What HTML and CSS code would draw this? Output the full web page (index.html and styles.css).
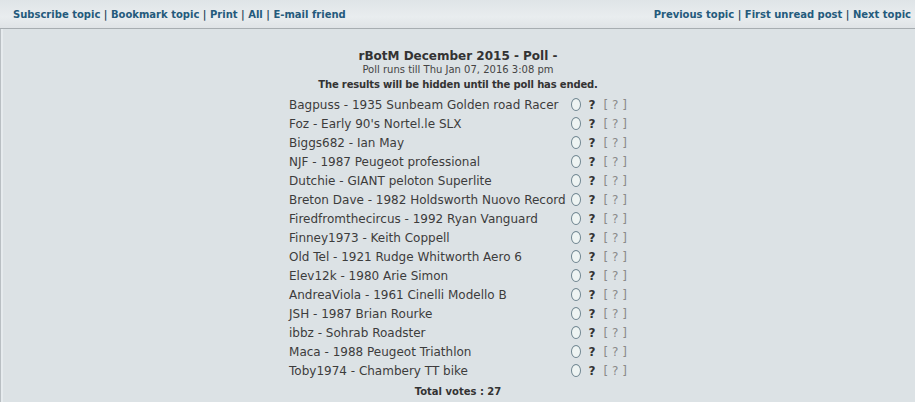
FILE: index.html
```html
<!DOCTYPE html>
<html>
<head>
<meta charset="utf-8">
<link rel="stylesheet" href="styles.css">
</head>
<body>
<div class="topbar">
  <div class="links"><a>Subscribe topic</a> | <a>Bookmark topic</a> | <a>Print</a> | <a>All</a> | <a>E-mail friend</a></div>
  <div class="links"><a>Previous topic</a> | <a>First unread post</a> | <a>Next topic</a></div>
</div>
<div class="page">
  <div class="poll">
    <div class="title">rBotM December 2015 - Poll -</div>
    <div class="runs">Poll runs till Thu Jan 07, 2016 3:08 pm</div>
    <div class="hidden">The results will be hidden until the poll has ended.</div>
    <table class="options">
      <tr><td class="opt">Bagpuss - 1935 Sunbeam Golden road Racer</td><td class="rad"><span class="radio"></span></td><td class="q">?</td><td class="br">[ ? ]</td></tr>
      <tr><td class="opt">Foz - Early 90's Nortel.le SLX</td><td class="rad"><span class="radio"></span></td><td class="q">?</td><td class="br">[ ? ]</td></tr>
      <tr><td class="opt">Biggs682 - Ian May</td><td class="rad"><span class="radio"></span></td><td class="q">?</td><td class="br">[ ? ]</td></tr>
      <tr><td class="opt">NJF - 1987 Peugeot professional</td><td class="rad"><span class="radio"></span></td><td class="q">?</td><td class="br">[ ? ]</td></tr>
      <tr><td class="opt">Dutchie - GIANT peloton Superlite</td><td class="rad"><span class="radio"></span></td><td class="q">?</td><td class="br">[ ? ]</td></tr>
      <tr><td class="opt">Breton Dave - 1982 Holdsworth Nuovo Record</td><td class="rad"><span class="radio"></span></td><td class="q">?</td><td class="br">[ ? ]</td></tr>
      <tr><td class="opt">Firedfromthecircus - 1992 Ryan Vanguard</td><td class="rad"><span class="radio"></span></td><td class="q">?</td><td class="br">[ ? ]</td></tr>
      <tr><td class="opt">Finney1973 - Keith Coppell</td><td class="rad"><span class="radio"></span></td><td class="q">?</td><td class="br">[ ? ]</td></tr>
      <tr><td class="opt">Old Tel - 1921 Rudge Whitworth Aero 6</td><td class="rad"><span class="radio"></span></td><td class="q">?</td><td class="br">[ ? ]</td></tr>
      <tr><td class="opt">Elev12k - 1980 Arie Simon</td><td class="rad"><span class="radio"></span></td><td class="q">?</td><td class="br">[ ? ]</td></tr>
      <tr><td class="opt">AndreaViola - 1961 Cinelli Modello B</td><td class="rad"><span class="radio"></span></td><td class="q">?</td><td class="br">[ ? ]</td></tr>
      <tr><td class="opt">JSH - 1987 Brian Rourke</td><td class="rad"><span class="radio"></span></td><td class="q">?</td><td class="br">[ ? ]</td></tr>
      <tr><td class="opt">ibbz - Sohrab Roadster</td><td class="rad"><span class="radio"></span></td><td class="q">?</td><td class="br">[ ? ]</td></tr>
      <tr><td class="opt">Maca - 1988 Peugeot Triathlon</td><td class="rad"><span class="radio"></span></td><td class="q">?</td><td class="br">[ ? ]</td></tr>
      <tr><td class="opt">Toby1974 - Chambery TT bike</td><td class="rad"><span class="radio"></span></td><td class="q">?</td><td class="br">[ ? ]</td></tr>
    </table>
    <div class="total">Total votes : 27</div>
  </div>
</div>
</body>
</html>
```

FILE: styles.css
```css
html, body {
  margin: 0;
  padding: 0;
}
body {
  background: #dce2e5;
  font-family: "DejaVu Sans", Verdana, sans-serif;
  color: #3a3a3a;
  height: 402px;
  overflow: hidden;
}
.topbar {
  display: flex;
  justify-content: space-between;
  align-items: center;
  height: 29px;
  padding: 1px 4px 0 13px;
  box-sizing: border-box;
  background: linear-gradient(#dfe4e7, #e9edef 60%, #dfe3e6);
  border-bottom: 1px solid #a7adb1;
  font-size: 10px;
  font-weight: bold;
  color: #2b4a5e;
}
.links a {
  color: #245a7c;
}
.page {
  border-left: 1px solid #b9bfc3;
  box-shadow: inset 2px 0 0 #e6ebee;
  height: 373px;
  padding-top: 19px;
  box-sizing: border-box;
}
.poll {
  text-align: center;
}
.title {
  font-size: 12px;
  font-weight: bold;
  color: #333;
  line-height: 16px;
}
.runs {
  font-size: 10px;
  color: #444;
  line-height: 13px;
  margin-top: -1px;
}
.hidden {
  font-size: 10px;
  font-weight: bold;
  color: #333;
  line-height: 13px;
  margin-top: 2px;
  letter-spacing: -0.15px;
}
.options {
  margin: 4px auto 0;
  border-collapse: collapse;
  text-align: left;
}
.options td {
  padding: 0;
  height: 19px;
  font-size: 12px;
  white-space: nowrap;
}
.opt {
  color: #3c3c3c;
  padding-right: 3px !important;
}
.rad {
  padding-right: 8px !important;
  padding-left: 2px !important;
}
.radio {
  display: inline-block;
  width: 8px;
  height: 11px;
  border: 1px solid #6f8590;
  border-radius: 50%;
  background: #eef4f3;
  vertical-align: -2px;
}
.q {
  font-weight: bold;
  color: #333;
  padding-right: 8px !important;
}
.br {
  color: #8a8a8a;
}
.total {
  font-size: 10px;
  font-weight: bold;
  color: #333;
  margin-top: 6px;
}
```
